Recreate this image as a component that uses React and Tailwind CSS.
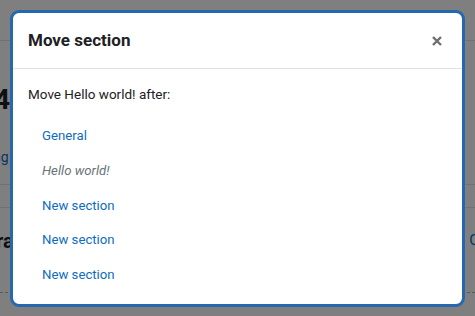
export default function App() {
  const font = { fontFamily: 'Roboto, "Liberation Sans", sans-serif' };
  return (
    <div className="relative w-[475px] h-[316px] overflow-hidden bg-white" style={font}>
      {/* page behind */}
      <div className="flex flex-col">
        <div className="h-[41px] border-b border-[#dee2e6]" />
        <div className="h-[143px] flex flex-col">
          <div className="mt-[43px] -ml-[6px] text-[28px] font-bold leading-[32px] text-[#1d2125]">4</div>
          <div className="mt-[33px] -ml-[7px] text-[14px] leading-[16px] text-[#0f6cbf]">ng</div>
        </div>
        <div className="h-[23px] border-t border-[#dee2e6]" />
        <div className="h-[85px] border-t border-[#dee2e6] flex justify-between items-start">
          <div className="mt-[21px] -ml-[4px] text-[20px] font-bold leading-[24px] text-[#1d2125]">ra</div>
          <div className="mt-[22px] mr-[-4px] text-[15px] leading-[20px] text-[#0f6cbf]">C</div>
        </div>
        <div className="border-t border-dashed border-[#adb5bd]" />
      </div>
      {/* overlay */}
      <div className="absolute inset-0 bg-black/50" />
      {/* modal */}
      <div className="absolute left-[10px] top-[10px] w-[455px] h-[297px] rounded-[9px] border-[3px] border-[#2568b0] bg-white flex flex-col">
        <div className="h-[56px] border-b border-[#dee2e6] flex items-center justify-between pl-[15px] pr-[20px]">
          <div className="text-[17px] font-bold text-[#1d2125]">Move section</div>
          <svg width="10" height="10" viewBox="0 0 10 10">
            <path d="M1 1 L9 9 M9 1 L1 9" stroke="#6c6f72" strokeWidth="2.4" strokeLinecap="butt" />
          </svg>
        </div>
        <div className="px-[15px] pt-[15px] flex flex-col">
          <div className="text-[13.5px] leading-[20px] text-[#1d2125]">Move Hello world! after:</div>
          <div className="flex flex-col pl-[14px] mt-[22px] gap-[14.75px] text-[13.2px] leading-[20px]">
            <div className="text-[#0f6cbf]">General</div>
            <div className="text-[#6a737b] italic">Hello world!</div>
            <div className="text-[#0f6cbf]">New section</div>
            <div className="text-[#0f6cbf]">New section</div>
            <div className="text-[#0f6cbf]">New section</div>
          </div>
        </div>
      </div>
    </div>
  );
}
